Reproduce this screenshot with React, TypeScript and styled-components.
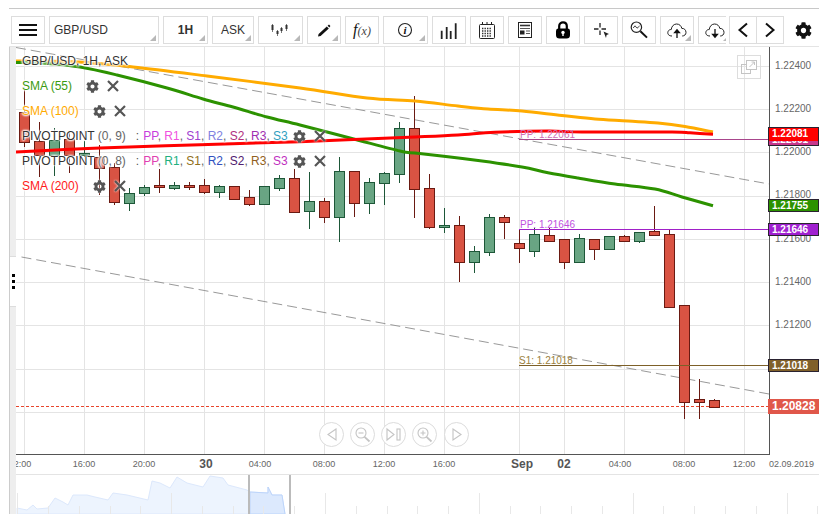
import React from "react";
import styled, { createGlobalStyle } from "styled-components";
import { FaCog } from "react-icons/fa";

const Global = createGlobalStyle`
  html, body { margin: 0; padding: 0; background: #fff; }
  body { font-family: "Liberation Sans", Arial, sans-serif; color: #333; }
`;

const Page = styled.div`
  width: 830px;
  height: 519px;
  padding: 8px 11px 0 9px;
  box-sizing: border-box;
  overflow: hidden;
`;
const Header = styled.header`
  display: flex;
  align-items: flex-start;
  height: 39px;
  padding: 7px 0 0 2px;
  box-sizing: border-box;
  border-top: 1px solid #c8c8c8;
  border-bottom: 1px solid #e4e4e4;
`;
const ToolScroll = styled.div`
  display: flex;
  gap: 4px;
  width: 715px;
  overflow: hidden;
  flex: none;
`;
const ToolButton = styled.div<{ $w: number; $caret?: boolean; $left?: boolean; $bold?: boolean }>`
  position: relative;
  flex: none;
  box-sizing: border-box;
  width: ${(p) => p.$w}px;
  height: 28px;
  border: 1px solid #ddd;
  display: flex;
  align-items: center;
  justify-content: ${(p) => (p.$left ? "flex-start" : "center")};
  padding-left: ${(p) => (p.$left ? "4px" : "0")};
  font-size: 12px;
  font-weight: ${(p) => (p.$bold ? 700 : 400)};
  color: #333;
  background: #fff;
  &::after {
    content: "";
    display: ${(p) => (p.$caret ? "block" : "none")};
    position: absolute;
    right: 2px;
    bottom: 2px;
    border-style: solid;
    border-width: 0 0 6px 6px;
    border-color: transparent transparent #b8b8b8 transparent;
  }
`;
const Pager = styled.div`
  display: flex;
  margin-left: 3px;
  flex: none;
`;
const PagerButton = styled(ToolButton)`
  width: 28px;
  & + & { margin-left: -1px; }
`;
const GearSlot = styled.div`
  flex: none;
  width: 38px;
  height: 28px;
  display: flex;
  align-items: center;
  justify-content: center;
  color: #111;
`;
const FxText = styled.span`
  font-family: "Liberation Serif", serif;
  font-style: italic;
  font-size: 12px;
  color: #444;
  & > b { font-size: 16px; font-weight: 400; color: #111; }
`;
const Main = styled.div`
  display: flex;
  height: 467px;
`;
const Strip = styled.div`
  position: relative;
  flex: none;
  width: 7px;
  box-sizing: border-box;
  background: #eee;
  border-left: 1px solid #ccc;
`;
const Handle = styled.div`
  position: absolute;
  left: 0;
  right: 0;
  top: 209px;
  height: 51px;
  background: #fff;
  border-top: 1px solid #ddd;
  border-bottom: 1px solid #ddd;
  box-sizing: border-box;
  display: flex;
  flex-direction: column;
  align-items: center;
  justify-content: center;
  gap: 3px;
`;
const Dot = styled.i`
  display: block;
  width: 3px;
  height: 3px;
  background: #000;
`;
const Content = styled.div`
  flex: 1;
  display: flex;
  flex-direction: column;
  min-width: 0;
`;
const Plot = styled.div`
  position: relative;
  width: 803px;
  height: 428px;
  flex: none;
`;
const Drawing = styled.svg`
  display: block;
`;
const Legend = styled.div`
  position: absolute;
  left: 6px;
  top: 1.5px;
  display: flex;
  flex-direction: column;
  font-size: 12px;
  text-shadow: 1px 0 2px #fff, -1px 0 2px #fff, 0 1px 2px #fff, 0 -1px 2px #fff, 0 0 2px #fff;
`;
const LegendRow = styled.div<{ $color?: string }>`
  display: flex;
  align-items: center;
  height: 25px;
  white-space: pre;
  color: ${(p) => p.$color || "#333"};
`;
const Muted = styled.span`
  color: #666;
`;
const Sep = styled.span`
  color: #555;
  margin: 0 4px 0 10px;
`;
const Level = styled.span<{ $color: string }>`
  color: ${(p) => p.$color};
`;
const RowIcons = styled.span<{ $gap: number }>`
  display: inline-flex;
  align-items: center;
  gap: 8px;
  margin-left: ${(p) => p.$gap}px;
  color: #555;
  filter: drop-shadow(0 0 1px #fff);
`;
const Tag = styled.div<{ $bg: string; $top: number; $flat?: boolean }>`
  position: absolute;
  left: 752px;
  top: ${(p) => p.$top}px;
  width: 51px;
  height: 13px;
  box-sizing: border-box;
  border: 1px solid #2a2230;
  border-width: ${(p) => (p.$flat ? "0 1px" : "1px")};
  background: ${(p) => p.$bg};
  color: #fff;
  font-size: 10px;
  font-weight: 700;
  line-height: 11px;
  padding-left: 3px;
`;
const LastTag = styled.div`
  position: absolute;
  left: 752px;
  top: 352px;
  width: 51px;
  height: 15px;
  background: #e0574a;
  color: #fff;
  font-size: 12px;
  line-height: 15px;
  font-weight: 700;
  padding-left: 4px;
  box-sizing: border-box;
`;
const Expand = styled.div`
  position: absolute;
  left: 721px;
  top: 8px;
  width: 24px;
  height: 24px;
  box-sizing: border-box;
  border: 1px solid #ddd;
  display: flex;
  align-items: center;
  justify-content: center;
`;
const NavRow = styled.div`
  position: absolute;
  left: 302.5px;
  top: 375px;
  display: flex;
  gap: 6.25px;
`;
const NavButton = styled.div`
  width: 25px;
  height: 25px;
  box-sizing: border-box;
  border: 1px solid #dcdcdc;
  border-radius: 50%;
  background: #fff;
  display: flex;
  align-items: center;
  justify-content: center;
`;

type C = [number, number, number, number, "r" | "g"];
// body top, body bottom, wick top, wick bottom
const candles: C[] = [
  [112, 142, 90, 147, "r"], [141, 155, 122, 177, "r"], [140, 155, 128, 176, "g"], [139, 155, 132, 173, "r"],
  [153, 155, 141, 157, "g"], [157, 168, 145, 195, "r"], [167, 202, 163, 205, "r"], [193, 203, 188, 211, "g"],
  [187, 193, 185, 196, "g"], [185, 187, 169, 193, "r"], [185, 188, 182, 190, "g"], [185, 187, 182, 190, "r"],
  [185, 192, 179, 194, "r"], [186, 192, 185, 198, "g"], [186, 199, 186, 200, "r"], [197, 204, 190, 206, "r"],
  [186, 204, 186, 205, "g"], [178, 188, 175, 191, "g"], [178, 212, 169, 213, "r"], [201, 211, 172, 229, "g"],
  [201, 217, 198, 223, "r"], [171, 217, 157, 242, "g"], [171, 203, 171, 217, "r"], [182, 203, 178, 214, "g"],
  [173, 183, 172, 205, "g"], [128, 174, 122, 183, "g"], [128, 189, 96, 218, "r"], [188, 227, 174, 229, "r"],
  [225, 227, 208, 233, "g"], [225, 262, 216, 282, "r"], [251, 262, 246, 273, "g"], [217, 252, 214, 256, "g"],
  [217, 222, 215, 239, "r"], [243, 248, 229, 263, "r"], [234, 251, 228, 257, "g"], [235, 241, 228, 241, "r"],
  [239, 262, 239, 269, "r"], [238, 262, 234, 262, "g"], [239, 249, 239, 260, "r"], [236, 249, 236, 249, "g"],
  [236, 241, 235, 242, "r"], [232, 241, 232, 243, "g"], [231, 235, 206, 236, "r"], [234, 307, 229, 308, "r"],
  [305, 402, 305, 419, "r"], [399, 402, 379, 419, "r"], [400, 407, 399, 407, "r"],
];

type P = [number, number];
const smooth = (pts: P[]) => {
  let d = `M${pts[0][0]} ${pts[0][1]}`;
  for (let i = 0; i < pts.length - 1; i++) {
    const a = pts[Math.max(0, i - 1)];
    const b = pts[i];
    const c = pts[i + 1];
    const e = pts[Math.min(pts.length - 1, i + 2)];
    const c1x = b[0] + (c[0] - a[0]) / 6;
    const c1y = b[1] + (c[1] - a[1]) / 6;
    const c2x = c[0] - (e[0] - b[0]) / 6;
    const c2y = c[1] - (e[1] - b[1]) / 6;
    d += ` C${c1x.toFixed(1)} ${c1y.toFixed(1)} ${c2x.toFixed(1)} ${c2y.toFixed(1)} ${c[0]} ${c[1]}`;
  }
  return d;
};
const orange: P[] = [[16, 61], [78, 62], [133, 67], [207, 76], [300, 88], [367, 98], [415, 101], [458, 106], [488, 109], [522, 111], [562, 115.5], [595, 119], [628, 121], [658, 123], [685, 126.5], [713, 132]];
const green: P[] = [[16, 62.5], [43, 63], [80, 67], [117, 75], [167, 88], [203, 99], [233, 107], [267, 117], [300, 125], [350, 138], [400, 151], [415, 153], [448, 156.7], [482, 161], [522, 167], [548, 172.7], [578, 178], [615, 184], [655, 189], [682, 197], [713, 205.7]];
const red: P[] = [[16, 152], [100, 148], [200, 144.7], [300, 141.7], [415, 137], [458, 135], [495, 132.3], [548, 131], [582, 132], [672, 132], [690, 132.8], [713, 134.3]];

const gridX = [24.5, 84.5, 144.5, 204.5, 264.5, 324.5, 384.5, 444.5, 519.5, 564.5, 624.5, 684.5, 744.5];
const gridY = [66.5, 109.5, 152.5, 196.5, 239.5, 282.5, 325.5, 369.5, 412.5];
const prices: [string, number][] = [
  ["1.22400", 69], ["1.22200", 112], ["1.22000", 155], ["1.21800", 198], ["1.21600", 242],
  ["1.21400", 285], ["1.21200", 328], ["1.21000", 371], ["1.20800", 414],
];
const times: [string, number][] = [
  ["12:00", 20], ["16:00", 84], ["20:00", 144], ["04:00", 260], ["08:00", 324], ["12:00", 384],
  ["16:00", 444], ["04:00", 620], ["08:00", 684], ["12:00", 744],
];
const dayLabels: [string, number][] = [["30", 206], ["Sep", 522], ["02", 564]];

const navArea =
  "17,514 17,508 27,510 33,505 37,509 48,508 55,498 63,502 68,505 73,495 87,495 95,497 108,500 113,493 127,495 148,500 152,481 160,483 170,488 177,477 187,483 203,487 210,476 223,478 228,485 247,490 250,492 268,493 268,487 272,495 282,495 285,514";

const Gear = () => <FaCog size={13} />;
const Close = () => (
  <svg width="12" height="12" viewBox="0 0 12 12">
    <path d="M1 1 L11 11 M11 1 L1 11" stroke="#555" strokeWidth="2.2" fill="none" />
  </svg>
);
const Icon = ({ children }: { children: React.ReactNode }) => (
  <svg width="20" height="20" viewBox="0 0 20 20">{children}</svg>
);
const Cloud = ({ up }: { up: boolean }) => (
  <Icon>
    <path d="M5 16 C1.5 16 0.3 13.8 1 11.6 C1.6 10 3 9.4 4.2 9.6 C4.6 6 7 4 9.6 4 C12.4 4 14.4 6 14.8 8.4 C17.2 8.2 19 10 19 12.4 C19 14.6 17.4 16 15.2 16" fill="none" stroke="#222" strokeWidth="1" />
    {up ? (
      <path d="M10 18 V12 M7.6 12.6 L10 9.8 L12.4 12.6 Z" stroke="#111" strokeWidth="1.3" fill="#111" />
    ) : (
      <path d="M10 9 V15 M7.6 14.4 L10 17.2 L12.4 14.4 Z" stroke="#111" strokeWidth="1.3" fill="#111" />
    )}
  </Icon>
);
const Loupe = ({ plus }: { plus: boolean }) => (
  <svg width="17" height="17" viewBox="0 0 17 17" fill="none" stroke="#c4c4c4" strokeWidth="1.1">
    <circle cx="7" cy="7" r="5" />
    <path d="M10.5 10.8 L15.5 15.5" strokeWidth="1.8" />
    <path d={plus ? "M4.5 7 H9.5 M7 4.5 V9.5" : "M4.5 7 H9.5"} />
  </svg>
);

const levels1: [string, string][] = [["PP", "#c83cdc"], ["R1", "#f050e0"], ["S1", "#a040d0"], ["R2", "#8080e0"], ["S2", "#b03080"], ["R3", "#a030b0"], ["S3", "#30a0c0"]];
const levels2: [string, string][] = [["PP", "#e040b0"], ["R1", "#20b080"], ["S1", "#907020"], ["R2", "#3050c0"], ["S2", "#502070"], ["R3", "#906020"], ["S3", "#c030c0"]];

const Levels = ({ items }: { items: [string, string][] }) => (
  <span>
    {items.map(([n, c], i) => (
      <React.Fragment key={n}>
        <Level $color={c}>{n}</Level>
        {i < items.length - 1 ? <Muted>, </Muted> : null}
      </React.Fragment>
    ))}
  </span>
);

export default function App() {
  return (
    <Page>
      <Global />
      <Header>
        <ToolScroll>
          <ToolButton $w={34}>
            <Icon>
              <rect x="1" y="4" width="18" height="2" fill="#111" />
              <rect x="1" y="9" width="18" height="2" fill="#111" />
              <rect x="1" y="14" width="18" height="2" fill="#111" />
            </Icon>
          </ToolButton>
          <ToolButton $w={110} $caret $left>GBP/USD</ToolButton>
          <ToolButton $w={45} $caret $bold>1H</ToolButton>
          <ToolButton $w={42} $caret>ASK</ToolButton>
          <ToolButton $w={45} $caret>
            <Icon>
              <path d="M1.5 4 V12 M6.5 10 V16 M10.5 7 V13 M15.5 4 V11" stroke="#777" strokeWidth="1" />
              <path d="M0.5 5 H2.5 V10 H0.5 Z M5.5 11 H7.5 V14 H5.5 Z M9.5 8 H11.5 V11 H9.5 Z M14.5 5 H16.5 V9 H14.5 Z" fill="#333" />
            </Icon>
          </ToolButton>
          <ToolButton $w={34} $caret>
            <Icon>
              <path d="M4 16.5 L4.6 14 L12.8 6.6 L14.8 8.4 L6.6 16 Z M13.6 5.8 L15 4.4 L16.4 6 L15.4 7.6 Z" fill="#111" />
            </Icon>
          </ToolButton>
          <ToolButton $w={34}>
            <FxText><b>f</b>(x)</FxText>
          </ToolButton>
          <ToolButton $w={45} $caret>
            <svg width="20" height="20" viewBox="0 0 20 20">
              <circle cx="9" cy="10" r="6.5" fill="none" stroke="#222" strokeWidth="1.1" />
              <text x="9" y="14" textAnchor="middle" fontFamily="Liberation Serif" fontStyle="italic" fontWeight="700" fontSize="11" fill="#111">i</text>
            </svg>
          </ToolButton>
          <ToolButton $w={34}>
            <Icon>
              <path d="M2.7 10.7 V19 M7.7 7 V19 M11.7 11 V19 M16.7 3.3 V19" stroke="#222" strokeWidth="1.8" />
            </Icon>
          </ToolButton>
          <ToolButton $w={34}>
            <Icon>
              <rect x="2.5" y="4.5" width="15" height="14" rx="1" fill="none" stroke="#222" strokeWidth="1" />
              <path d="M5.5 2 V5 M10 2 V5 M14.5 2 V5" stroke="#222" strokeWidth="1" />
              <path d="M5 8.5 H15 M5 11 H15 M5 13.5 H15 M5 16 H15" stroke="#333" strokeWidth="1.4" strokeDasharray="1.4 1.1" />
            </Icon>
          </ToolButton>
          <ToolButton $w={34}>
            <Icon>
              <rect x="3.5" y="2.5" width="13" height="15" fill="none" stroke="#222" strokeWidth="1" />
              <path d="M5 5.5 H15" stroke="#333" strokeWidth="1.6" />
              <path d="M5 8.5 H15 M11 11 H15 M11 13.5 H15" stroke="#555" strokeWidth="1" />
              <rect x="5" y="10.5" width="4.5" height="4" fill="#222" />
            </Icon>
          </ToolButton>
          <ToolButton $w={34}>
            <Icon>
              <path d="M6.2 9 V6 C6.2 1.2 13.8 1.2 13.8 6 V9" fill="none" stroke="#000" strokeWidth="2.2" />
              <path d="M5 8.5 H15 Q17 8.5 17 11 V15 Q17 18.5 13.5 18.5 H6.5 Q3 18.5 3 15 V11 Q3 8.5 5 8.5 Z" fill="#000" />
              <circle cx="10" cy="12.4" r="1.7" fill="#fff" />
              <rect x="9.3" y="13" width="1.4" height="3" fill="#fff" />
            </Icon>
          </ToolButton>
          <ToolButton $w={34}>
            <Icon>
              <path d="M9 3 V7.5 M9 10.5 V15 M3 9 H7.5 M10.5 9 H15" stroke="#222" strokeWidth="1.3" />
              <path d="M12.5 11.5 L18 14 L15.6 15 L15 18 Z" fill="#222" />
            </Icon>
          </ToolButton>
          <ToolButton $w={34}>
            <Icon>
              <circle cx="7.4" cy="7.2" r="5.2" fill="none" stroke="#222" strokeWidth="1.2" />
              <path d="M4.2 8 L6 5.8 L8 8.2 L10.6 6" fill="none" stroke="#333" strokeWidth="0.9" />
              <path d="M11.4 11.2 L18 17.6" stroke="#111" strokeWidth="2" />
            </Icon>
          </ToolButton>
          <ToolButton $w={34} $caret>
            <Cloud up />
          </ToolButton>
          <ToolButton $w={34} $caret>
            <Cloud up={false} />
          </ToolButton>
        </ToolScroll>
        <Pager>
          <PagerButton $w={28}>
            <svg width="12" height="16" viewBox="0 0 12 16"><path d="M10 1.5 L2.5 8 L10 14.5" fill="none" stroke="#111" strokeWidth="2" /></svg>
          </PagerButton>
          <PagerButton $w={28}>
            <svg width="12" height="16" viewBox="0 0 12 16"><path d="M2 1.5 L9.5 8 L2 14.5" fill="none" stroke="#111" strokeWidth="2" /></svg>
          </PagerButton>
        </Pager>
        <GearSlot>
          <FaCog size={17} />
        </GearSlot>
      </Header>
      <Main>
        <Strip>
          <Handle>
            <Dot />
            <Dot />
            <Dot />
          </Handle>
        </Strip>
        <Content>
          <Plot>
            <Drawing width="803" height="428" viewBox="16 47 803 428" fontFamily="Liberation Sans, Arial, sans-serif">
              {gridX.map((x) => (
                <line key={x} x1={x} x2={x} y1="47" y2="454" stroke="#e4e4e4" />
              ))}
              {gridY.map((y) => (
                <line key={y} x1="16" x2="769" y1={y} y2={y} stroke="#e4e4e4" />
              ))}
              <line x1="16" y1="47.5" x2="769" y2="184" stroke="#999" strokeDasharray="10 5" />
              <line x1="21.5" y1="257" x2="769" y2="394" stroke="#999" strokeDasharray="10 5" />
              {candles.map(([t, b, wt, wb, k], i) => {
                const x = 24.5 + 15 * i;
                const stroke = k === "r" ? "#6a1a12" : "#1d5738";
                const fill = k === "r" ? "#d95343" : "#69a583";
                return (
                  <g key={i}>
                    <line x1={x} x2={x} y1={wt} y2={wb} stroke={stroke} />
                    <rect x={x - 5} y={Math.round(t) + 0.5} width="10" height={Math.max(1, Math.round(b - t))} fill={fill} stroke={stroke} />
                  </g>
                );
              })}
              <path d={smooth(orange)} fill="none" stroke="#ffab00" strokeWidth="3" />
              <path d={smooth(green)} fill="none" stroke="#2c9200" strokeWidth="3" />
              <path d={smooth(red)} fill="none" stroke="#ff0000" strokeWidth="3" />
              <line x1="519" x2="769" y1="139.5" y2="139.5" stroke="#a8468c" />
              <line x1="519" x2="769" y1="229.5" y2="229.5" stroke="#a020c8" />
              <line x1="519" x2="769" y1="365.5" y2="365.5" stroke="#7d6028" />
              <line x1="16" x2="769" y1="406.5" y2="406.5" stroke="#e8452c" strokeDasharray="3 2" />
              <text x="520" y="138" fontSize="10" fill="#d070b8">PP: 1.22061</text>
              <text x="520" y="228" fontSize="10" fill="#c050e0">PP: 1.21646</text>
              <text x="519" y="364" fontSize="10" fill="#9a8040">S1: 1.21018</text>
              <line x1="769.5" x2="769.5" y1="47" y2="455" stroke="#555" />
              <line x1="16" x2="770" y1="454.5" y2="454.5" stroke="#555" />
              <line x1="16" x2="819" y1="474.5" y2="474.5" stroke="#e4e4e4" />
              {prices.map(([p, y]) => (
                <text key={p} x="775" y={y} fontSize="10" fill="#666">{p}</text>
              ))}
              {times.map(([t, x]) => (
                <text key={t + x} x={x} y="467" fontSize="9" fill="#666" textAnchor="middle">{t}</text>
              ))}
              {dayLabels.map(([t, x]) => (
                <text key={t} x={x} y="468" fontSize="12" fontWeight="700" fill="#555" textAnchor="middle">{t}</text>
              ))}
              <text x="769" y="467" fontSize="9" fill="#666">02.09.2019</text>
            </Drawing>
            <Legend>
              <LegendRow>GBP/USD, 1H, ASK</LegendRow>
              <LegendRow $color="#3a9a10">
                <span>SMA (55)</span>
                <RowIcons $gap={14}><Gear /><Close /></RowIcons>
              </LegendRow>
              <LegendRow $color="#ffaa00">
                <span>SMA (100)</span>
                <RowIcons $gap={14}><Gear /><Close /></RowIcons>
              </LegendRow>
              <LegendRow>
                <span>PIVOTPOINT <Muted>(0, 9)</Muted></span>
                <Sep>:</Sep>
                <Levels items={levels1} />
                <RowIcons $gap={5}><Gear /><Close /></RowIcons>
              </LegendRow>
              <LegendRow>
                <span>PIVOTPOINT <Muted>(0, 8)</Muted></span>
                <Sep>:</Sep>
                <Levels items={levels2} />
                <RowIcons $gap={5}><Gear /><Close /></RowIcons>
              </LegendRow>
              <LegendRow $color="#ff1a1a">
                <span>SMA (200)</span>
                <RowIcons $gap={14}><Gear /><Close /></RowIcons>
              </LegendRow>
            </Legend>
            <Expand>
              <svg width="18" height="18" viewBox="0 0 18 18" fill="none" stroke="#c4c4c4" strokeWidth="1">
                <rect x="1.5" y="6.5" width="9" height="9" />
                <rect x="6.5" y="2.5" width="10" height="9" fill="#fff" />
                <path d="M9.5 9 L14.5 4 M11.5 4 H14.5 V7" />
              </svg>
            </Expand>
            <Tag $bg="#ff9d00" $top={80} />
            <Tag $bg="#c8388c" $top={86}>1.22061</Tag>
            <Tag $bg="#ff0000" $top={81} $flat>1.22081</Tag>
            <Tag $bg="#2c9200" $top={152}>1.21755</Tag>
            <Tag $bg="#a020d0" $top={176}>1.21646</Tag>
            <Tag $bg="#80602a" $top={312}>1.21018</Tag>
            <LastTag>1.20828</LastTag>
            <NavRow>
              <NavButton>
                <svg width="13" height="15" viewBox="0 0 13 15" fill="none" stroke="#c4c4c4" strokeWidth="1.1"><path d="M11 2 L3 7.5 L11 13 Z" /></svg>
              </NavButton>
              <NavButton><Loupe plus={false} /></NavButton>
              <NavButton>
                <svg width="17" height="15" viewBox="0 0 17 15" fill="none" stroke="#c4c4c4" strokeWidth="1.1"><path d="M2 2 L9 7.5 L2 13 Z" /><rect x="12" y="2" width="3" height="11" /></svg>
              </NavButton>
              <NavButton><Loupe plus /></NavButton>
              <NavButton>
                <svg width="13" height="15" viewBox="0 0 13 15" fill="none" stroke="#c4c4c4" strokeWidth="1.1"><path d="M3 2 L11 7.5 L3 13 Z" /></svg>
              </NavButton>
            </NavRow>
          </Plot>
          <Drawing width="803" height="39" viewBox="16 475 803 39">
            <polygon points={navArea} fill="#edf4fe" stroke="#dce8fc" strokeWidth="1" />
            <polygon points="250,514 250,492 268,493 268,487 272,495 282,495 285,514" fill="#dce9fd" stroke="#bcd4fa" />
            {Array.from({ length: 27 }, (_, i) => {
              const x = Math.round(17.3 + 30.77 * i) + 0.5;
              return <line key={i} x1={x} x2={x} y1={i % 5 === 0 ? 493 : 506} y2="514" stroke="#e8e8e8" />;
            })}
            <rect x="248" y="475" width="2" height="39" fill="#bbb" />
            <rect x="289" y="475" width="2" height="39" fill="#bbb" />
          </Drawing>
        </Content>
      </Main>
    </Page>
  );
}
